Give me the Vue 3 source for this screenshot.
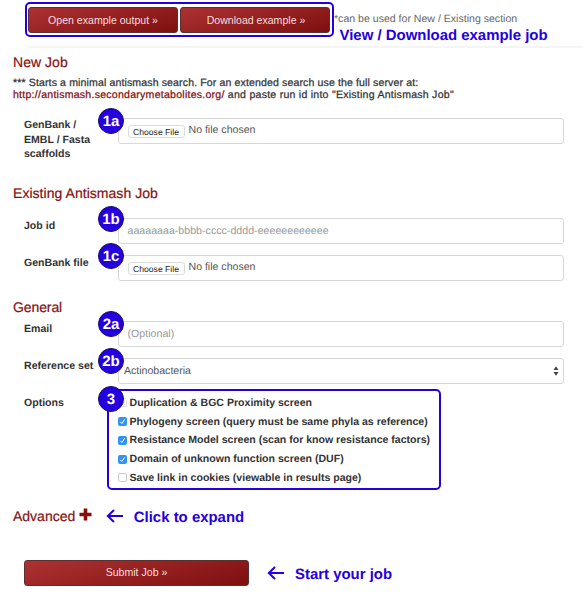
<script setup>
const options = [
  { text: 'Duplication & BGC Proximity screen', state: 'locked' },
  { text: 'Phylogeny screen (query must be same phyla as reference)', state: 'checked' },
  { text: 'Resistance Model screen (scan for know resistance factors)', state: 'checked' },
  { text: 'Domain of unknown function screen (DUF)', state: 'checked' },
  { text: 'Save link in cookies (viewable in results page)', state: 'empty' },
]
</script>

<template>
  <main class="page">
    <header class="examples">
      <div class="example-frame">
        <button class="btn">Open example output »</button>
        <button class="btn">Download example »</button>
      </div>
      <div class="example-side">
        <span class="hint">*can be used for New / Existing section</span>
        <span class="note view-note">View / Download example job</span>
      </div>
    </header>
    <div class="rule"></div>

    <section class="new-job">
      <h2>New Job</h2>
      <p class="intro">
        <span>*** Starts a minimal antismash search. For an extended search use the full server at:</span><br>
        <span class="line2"><a>http://antismash.secondarymetabolites.org/</a> and paste run id into "Existing Antismash Job"</span>
      </p>
      <div class="row first">
        <label>GenBank /<br>EMBL / Fasta<br>scaffolds</label>
        <div class="field file"><span class="choose">Choose File</span><span class="none">No file chosen</span><b class="badge">1a</b></div>
      </div>
    </section>

    <section class="existing">
      <h2>Existing Antismash Job</h2>
      <div class="row">
        <label>Job id</label>
        <div class="field"><span class="placeholder">aaaaaaaa-bbbb-cccc-dddd-eeeeeeeeeeee</span><b class="badge">1b</b></div>
      </div>
      <div class="row">
        <label>GenBank file</label>
        <div class="field file"><span class="choose">Choose File</span><span class="none">No file chosen</span><b class="badge">1c</b></div>
      </div>
    </section>

    <section class="general">
      <h2>General</h2>
      <div class="row">
        <label>Email</label>
        <div class="field"><span class="placeholder">(Optional)</span><b class="badge">2a</b></div>
      </div>
      <div class="row">
        <label>Reference set</label>
        <div class="field select">
          <span>Actinobacteria</span>
          <svg width="6" height="10" viewBox="0 0 6 10"><path d="M.5 4 3 .3 5.500 4ZM.5 6h5L3 9.700Z" fill="#444" /></svg>
          <b class="badge">2b</b>
        </div>
      </div>
      <div class="options-row">
        <label>Options</label>
        <div class="options">
          <div v-for="o in options" :key="o.text" class="option">
            <span class="box" :class="o.state">
              <svg v-if="o.state !== 'empty'" width="9" height="9" viewBox="0 0 9 9"><path d="M2.300 4.800 3.900 6.500 6.700 2.300" fill="none" stroke="currentColor" stroke-width="1" /></svg>
            </span>
            <span>{{ o.text }}</span>
          </div>
          <b class="badge">3</b>
        </div>
      </div>
    </section>

    <div class="advanced">
      <h2>Advanced</h2>
      <svg class="plus" width="13" height="13" viewBox="0 0 13 13"><path d="M4.700.5h3.600v4.200h4.200v3.600H8.300v4.200H4.700V8.300H.5V4.700h4.200Z" fill="#850f0f" /></svg>
      <svg class="arrow" width="18" height="14" viewBox="0 0 18 14"><path d="M17 7H2M8 1 1.800 7 8 13" fill="none" stroke="#2400e0" stroke-width="2" /></svg>
      <span class="note">Click to expand</span>
    </div>

    <div class="submit">
      <button class="btn">Submit Job »</button>
      <svg class="arrow" width="18" height="14" viewBox="0 0 18 14"><path d="M17 7H2M8 1 1.800 7 8 13" fill="none" stroke="#2400e0" stroke-width="2" /></svg>
      <span class="note">Start your job</span>
    </div>
  </main>
</template>

<style>
body { background: #fff; }
</style>

<style scoped>
* { box-sizing: border-box; }
.page {
  width: 583px;
  height: 593px;
  overflow: hidden;
  font-family: "Liberation Sans", Arial, sans-serif;
  font-size: 10.57px;
  color: #333;
  white-space: nowrap;
  text-rendering: geometricPrecision;
}
.examples { display: flex; height: 46px; padding: 2px 0 0 25px; }
.example-frame {
  display: flex;
  gap: 2px;
  width: 309px;
  height: 35px;
  padding: 3px 2px 0 1px;
  border: 2px solid #2400e0;
  border-radius: 5px;
}
.btn {
  width: 151px;
  height: 26px;
  padding: 0;
  border: 1px solid #5c3030;
  border-radius: 3px;
  background: linear-gradient(165deg, #ad3232, #7e0f0f);
  color: #f5dede;
  font: inherit;
  line-height: 23px;
}
.example-frame .btn + .btn { padding-left: 2px; }
.example-side { display: flex; flex-direction: column; }
.hint { height: 24px; line-height: 34px; color: #666; }
.note {
  color: #2400e0;
  font-size: 14.950px;
  font-weight: bold;
}
.view-note { padding-left: 5.500px; line-height: 20px; }
.rule { height: 2px; margin-left: 28px; background: #f5f5f5; }
h2 {
  margin: 0;
  color: #850f0f;
  font-size: 14px;
  font-weight: normal;
  line-height: 18px;
  -webkit-text-stroke: .2px #850f0f;
}
.new-job { height: 136px; padding: 5px 0 0 13px; }
.new-job h2, .existing h2 { letter-spacing: .04px; }
.intro {
  margin: 7px 0 0;
  line-height: 11.5px;
  letter-spacing: .12px;
  -webkit-text-stroke: .25px currentColor;
}
.line2 { letter-spacing: .245px; }
.intro a { color: #850f0f; }
.row { display: flex; height: 37.300px; padding-left: 11px; }
.first { margin-top: 17px; }
label { width: 94px; padding-top: 1px; font-weight: bold; line-height: 14.600px; }
.first label { padding-top: 0; }
.field {
  position: relative;
  display: flex;
  width: 446px;
  height: 26px;
  padding-left: 8.500px;
  border: 1px solid #d8d8d8;
  border-radius: 3px;
  color: #555;
  line-height: 25px;
}
.choose {
  width: 57px;
  height: 13px;
  margin-top: 6px;
  border: 1px solid #dcdcdc;
  border-radius: 3px;
  color: #222;
  font-size: 8.600px;
  line-height: 12px;
  text-align: center;
}
.none { margin-left: 4px; line-height: 23px; }
.placeholder { color: #999; letter-spacing: .04px; }
.badge {
  position: absolute;
  left: -21px;
  top: -11px;
  width: 26px;
  height: 26px;
  border: 1px solid #171064;
  border-radius: 50%;
  background: #2400e0;
  color: #fff;
  font-size: 15px;
  line-height: 25px;
  text-align: center;
}
.existing { height: 113.500px; padding: 0 0 0 13px; }
.existing h2 { margin-bottom: 16px; }
.existing .badge { top: -13px; }
.general { height: 208.500px; padding-left: 13px; }
.general h2 { margin-bottom: 5.500px; letter-spacing: -.1px; }
.select { justify-content: space-between; padding: 0 4px 0 5px; }
.select svg { margin-top: 7px; }
.options-row { display: flex; height: 101px; margin-top: -7px; padding-left: 11px; }
.options-row label { width: 83px; padding-top: 7px; }
.options {
  position: relative;
  width: 334px;
  height: 101px;
  padding: 3px 0 0 9px;
  border: 2px solid #2400e0;
  border-radius: 5px;
}
.option { display: flex; align-items: center; gap: 2.500px; height: 18.750px; font-weight: bold; }
.box { display: flex; width: 9px; height: 9px; border-radius: 2px; color: #fff; }
.checked { background: #3193f5; }
.empty { border: 1px solid #ccc; }
.locked { border: 1px solid #ddd; color: #aaa; }
.options .badge { left: -11px; top: -5px; }
.advanced { display: flex; align-items: center; height: 22px; margin-top: -1.500px; padding-left: 13px; }
.plus { margin-top: -2px; margin-left: 4px; }
.arrow { margin: 0 10px 0 13.500px; }
.advanced .note { margin-top: 3px; }
.submit { display: flex; align-items: center; height: 26px; margin-top: 33px; padding-left: 24px; }
.submit .btn { width: 225px; }
.submit .arrow { margin-left: 18px; }
.submit .note { margin-top: 3px; }
</style>
